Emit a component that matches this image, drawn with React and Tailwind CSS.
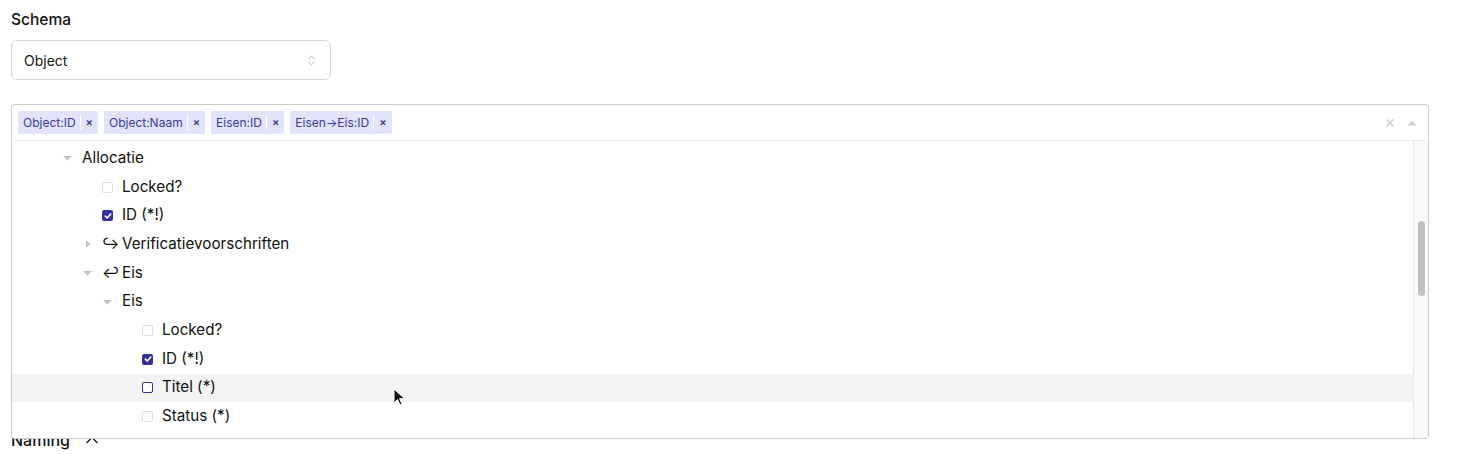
import { ChevronsUpDown, ChevronUp } from 'lucide-react'
import clsx from 'clsx'

const CHIPS = ['Object:ID', 'Object:Naam', 'Eisen:ID', 'Eisen→Eis:ID']

// pad = left padding inside the menu, kind = caret/leaf
const ROWS = [
  { label: 'Allocatie', pad: 50, caret: 'down' },
  { label: 'Locked?', pad: 70, check: 'off' },
  { label: 'ID (*!)', pad: 70, check: 'on' },
  { label: 'Verificatievoorschriften', pad: 70, caret: 'right', glyph: '↪' },
  { label: 'Eis', pad: 70, caret: 'down', glyph: '↩' },
  { label: 'Eis', pad: 90, caret: 'down' },
  { label: 'Locked?', pad: 110, check: 'off' },
  { label: 'ID (*!)', pad: 110, check: 'on' },
  { label: 'Titel (*)', pad: 110, check: 'hover', active: true },
  { label: 'Status (*)', pad: 110, check: 'off' },
]

function Caret({ dir }) {
  return (
    <svg width="20" height="12" viewBox="0 0 20 12" className="shrink-0">
      {dir === 'down' ? (
        <path d="M1 4 L10 4 L5.5 8.5 Z" fill="#c4c4c4" />
      ) : (
        <path d="M4 2 L8.5 6 L4 10 Z" fill="#c4c4c4" />
      )}
    </svg>
  )
}

function Check({ state }) {
  return (
    <span className="w-5 shrink-0 flex items-center">
      <span
        className={clsx(
          'w-[11px] h-[11px] rounded-[2px] flex items-center justify-center',
          state === 'on' && 'bg-[#37309c]',
          state === 'off' && 'border border-[#dedede] bg-white',
          state === 'hover' && 'border border-[#37309c] bg-white'
        )}
      >
        {state === 'on' && (
          <svg width="8" height="8" viewBox="0 0 8 8">
            <path d="M1.3 4.2 L3.2 6 L6.8 2" fill="none" stroke="white" strokeWidth="1.6" strokeLinecap="round" strokeLinejoin="round" />
          </svg>
        )}
      </span>
    </span>
  )
}

export default function App() {
  return (
    <div className="w-[1476px] h-[455px] overflow-hidden bg-white text-[#111] font-['Inter',sans-serif] px-[11px] pt-[10px]">
      <div className="text-[15.5px] font-medium leading-5">Schema</div>

      <div className="mt-[10px] w-[320px] h-[40px] rounded-md border border-[#d6d6da] flex items-center justify-between pl-3 pr-3">
        <span className="text-[14px]">Object</span>
        <ChevronsUpDown size={13} strokeWidth={1.5} className="text-[#a3a3a8]" />
      </div>

      <div className="relative mt-[24px] w-[1418px]">
        {/* control with chips */}
        <div className="h-[36px] rounded-t border border-[#cccccc] border-b-0 flex items-center pl-[6px] pr-[10px]">
          <div className="flex-1 flex items-center gap-[6px]">
            {CHIPS.map((c) => (
              <div key={c} className="h-[23px] rounded-[2px] bg-[#e1e4fb] text-[#3b3a9c] text-[12px] flex items-center">
                <span className="pl-[5px] pr-[4px]">{c}</span>
                <span className="w-px h-[15px] bg-white" />
                <span className="px-[5px] text-[11px] font-semibold">×</span>
              </div>
            ))}
          </div>
          <svg width="12" height="12" viewBox="0 0 12 12" className="mr-[10px]">
            <path d="M2.5 2.5 L9.5 9.5 M9.5 2.5 L2.5 9.5" stroke="#cfcfcf" strokeWidth="1.6" />
          </svg>
          <svg width="12" height="8" viewBox="0 0 12 8">
            <path d="M1.5 6.5 L6 2 L10.5 6.5 Z" fill="#cccccc" />
          </svg>
        </div>

        {/* menu */}
        <div className="absolute left-0 right-0 top-full h-[299px] bg-white border border-[#cccccc] border-t-[#ebebeb] rounded-b z-10 flex overflow-hidden">
          <div className="flex-1 pt-[3px]">
            {ROWS.map((r, i) => (
              <div
                key={i}
                className={clsx('h-[28.7px] flex items-center text-[15.2px]', r.active && 'bg-[#f3f3f3]')}
                style={{ paddingLeft: r.pad }}
              >
                {r.caret ? <Caret dir={r.caret} /> : <span className="w-5 shrink-0" />}
                {r.glyph && <span className="w-5 shrink-0">{r.glyph}</span>}
                {r.check && <Check state={r.check} />}
                <span>{r.label}</span>
              </div>
            ))}
          </div>
          <div className="w-[15px] bg-[#fafafa] border-l border-[#e8e8e8] pt-[80px] flex justify-center">
            <div className="w-[7px] h-[75px] rounded-full bg-[#c1c1c1]" />
          </div>
        </div>

        <svg width="14" height="20" viewBox="0 0 14 20" className="absolute left-[382px] top-[284px] z-20">
          <path d="M1 1 L1 15 L4.5 11.5 L7 17 L9 16 L6.6 10.6 L11.5 10.6 Z" fill="#111" stroke="white" strokeWidth="1" />
        </svg>
      </div>

      <div className="mt-[288px] flex items-center gap-3">
        <span className="text-[16px] font-medium">Naming</span>
        <ChevronUp size={20} strokeWidth={1.5} />
      </div>
    </div>
  )
}
